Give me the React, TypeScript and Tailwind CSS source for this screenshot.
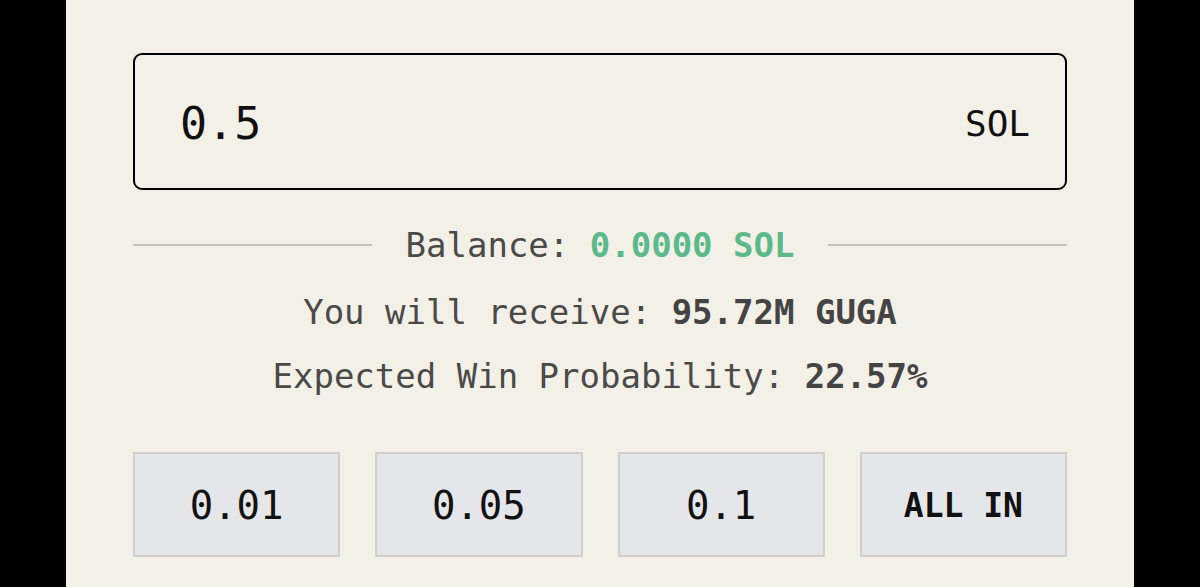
export default function App() {
  const presets = ['0.01', '0.05', '0.1'];

  return (
    <div className="w-full h-[587px] bg-black flex px-[66px] overflow-hidden" style={{ fontFamily: '"DejaVu Sans Mono", "Liberation Mono", monospace' }}>
      <div className="flex-1 bg-[#f3f0e8] px-[67px] pt-[53px] flex flex-col">
        {/* Amount input */}
        <div className="h-[137px] border-[2.5px] border-black rounded-[9px] flex items-center justify-between pl-[45px] pr-[35px] pt-[4px]">
          <span className="text-[45px] text-[#111]">0.5</span>
          <span className="text-[36px] text-[#111]">SOL</span>
        </div>

        {/* Balance */}
        <div className="mt-[35px] h-[40px] flex items-center gap-[34px]">
          <div className="flex-1 h-[2px] bg-[#c6c3bb]" />
          <div className="text-[34px] text-[#4a4a48] whitespace-nowrap">
            Balance: <span className="font-bold text-[#5cb98a]">0.0000 SOL</span>
          </div>
          <div className="flex-1 h-[2px] bg-[#c6c3bb]" />
        </div>

        <div className="mt-[27px] h-[40px] flex items-center justify-center text-[34px] text-[#4a4a48] whitespace-nowrap">
          You will receive:&nbsp;<span className="font-bold text-[#444]">95.72M GUGA</span>
        </div>

        <div className="mt-[24px] h-[40px] flex items-center justify-center text-[34px] text-[#4a4a48] whitespace-nowrap">
          Expected Win Probability:&nbsp;<span className="font-bold text-[#444]">22.57%</span>
        </div>

        {/* Preset buttons */}
        <div className="mt-[56px] grid grid-cols-4 gap-[35px]">
          {presets.map((p) => (
            <button key={p} className="h-[105px] bg-[#e5e6ea] border-2 border-[#cfcfcf] flex items-center justify-center pt-[3px] text-[39px] text-[#111]">
              {p}
            </button>
          ))}
          <button className="h-[105px] bg-[#e5e6ea] border-2 border-[#cfcfcf] flex items-center justify-center pt-[3px] text-[33px] font-bold text-[#111]">
            ALL IN
          </button>
        </div>
      </div>
    </div>
  );
}
